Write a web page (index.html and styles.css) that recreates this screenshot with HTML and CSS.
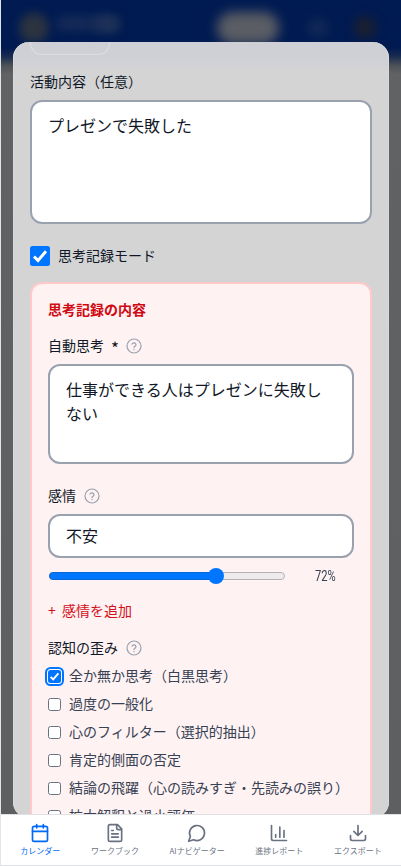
FILE: index.html
```html
<!DOCTYPE html>
<html lang="ja">
<head>
<meta charset="utf-8">
<title>思考記録</title>
<link rel="stylesheet" href="styles.css">
</head>
<body>
<svg class="defs" width="0" height="0" aria-hidden="true">
  <symbol id="help" viewBox="0 0 24 24"><circle cx="12" cy="12" r="10.5"/><path d="M9 9.2a3.1 3.1 0 0 1 6 1c0 2-3 2.4-3 4M12 17.2v.3"/></symbol>
  <symbol id="check" viewBox="0 0 20 20"><path d="M4 10.5l4 4L16 5.3"/></symbol>
</svg>
<div class="app">
  <main class="stage">
    <div class="backdrop">
      <i class="blob logo"></i><i class="blob title"></i><i class="blob title2"></i><i class="blob pill"></i><i class="blob dot"></i><i class="blob user"></i>
    </div>
    <section class="modal">
      <div class="chip"></div>
      <label class="label first">活動内容（任意）</label>
      <div class="field activity">プレゼンで失敗した</div>
      <div class="mode"><span class="box big"><svg><use href="#check"/></svg></span>思考記録モード</div>
      <div class="record">
        <h2>思考記録の内容</h2>
        <div class="label thought">自動思考<span class="star">*</span><svg class="help"><use href="#help"/></svg></div>
        <div class="field auto">仕事ができる人はプレゼンに失敗しない</div>
        <div class="label emotion">感情<svg class="help"><use href="#help"/></svg></div>
        <div class="field feeling">不安</div>
        <div class="range"><div class="track"><span class="fill"></span><span class="thumb"></span></div><span class="value"><span class="num">72%</span></span></div>
        <div class="add"><span class="plus">+</span>感情を追加</div>
        <div class="label distort">認知の歪み<svg class="help"><use href="#help"/></svg></div>
        <div class="options">
          <div class="option"><span class="box on"><svg><use href="#check"/></svg></span>全か無か思考（白黒思考）</div>
          <div class="option"><span class="box"></span>過度の一般化</div>
          <div class="option"><span class="box"></span>心のフィルター（選択的抽出）</div>
          <div class="option"><span class="box"></span>肯定的側面の否定</div>
          <div class="option"><span class="box"></span>結論の飛躍（心の読みすぎ・先読みの誤り）</div>
          <div class="option"><span class="box"></span>拡大解釈と過小評価</div>
        </div>
      </div>
    </section>
  </main>
  <nav class="nav">
    <a class="active"><svg viewBox="0 0 24 24"><rect x="3" y="4" width="18" height="18" rx="2"/><path d="M8 2v4M16 2v4M3 10h18"/></svg><span>カレンダー</span></a>
    <a><svg viewBox="0 0 24 24"><path d="M15 2H6a2 2 0 0 0-2 2v16a2 2 0 0 0 2 2h12a2 2 0 0 0 2-2V7zM14 2v4a2 2 0 0 0 2 2h4M10 9H8M16 13H8M16 17H8"/></svg><span>ワークブック</span></a>
    <a><svg viewBox="0 0 24 24"><path d="M7.9 20A9 9 0 1 0 4 16.1L2 22z"/></svg><span>AIナビゲーター</span></a>
    <a><svg viewBox="0 0 24 24"><path d="M3 3v16a2 2 0 0 0 2 2h16M18 17V9M13 17V5M8 17v-3"/></svg><span>進捗レポート</span></a>
    <a><svg viewBox="0 0 24 24"><path d="M21 15v4a2 2 0 0 1-2 2H5a2 2 0 0 1-2-2v-4M7 10l5 5 5-5M12 15V3"/></svg><span>エクスポート</span></a>
  </nav>
</div>
</body>
</html>
```
FILE: styles.css
```css
* { box-sizing: border-box; }
body { margin: 0; font-family: "Noto Sans CJK JP", sans-serif; font-size: 14px; color: #101828; }
svg { fill: none; stroke: currentColor; stroke-width: 2; stroke-linecap: round; stroke-linejoin: round; }
.defs { position: absolute; }
.app { width: 401px; height: 866px; border-left: 1px solid #e2e4e8; border-bottom: 1px solid #dfe1e5; display: flex; flex-direction: column; overflow: hidden; }
.stage { position: relative; height: 814px; flex: none; overflow: hidden; padding: 42px 12px 0; }
.backdrop { position: absolute; inset: 0; background: linear-gradient(#001b52 0, #001b52 48px, #182a50 56px, #4f5358 66px, #606264 74px, #5d5f61 100%); }
.blob { position: absolute; border-radius: 20px; filter: blur(5px); }
.logo { left: 18px; top: 13px; width: 30px; height: 30px; background: #2b3340; }
.title { left: 55px; top: 16px; width: 62px; height: 15px; background: #152a57; }
.title2 { left: 94px; top: 16px; width: 25px; height: 16px; background: #1e3157; }
.pill { left: 216px; top: 12px; width: 62px; height: 32px; background: #5a5d64; filter: blur(6px); }
.dot { left: 306px; top: 18px; width: 22px; height: 20px; background: #102756; }
.user { left: 353px; top: 16px; width: 22px; height: 23px; background: #181f30; }
.modal { position: relative; height: 776px; border-radius: 16px; overflow: hidden; padding: 0 17px; background: linear-gradient(#cfd0d6 0, #cfd0d6 16px, #d4d4d5 30px); box-shadow: inset 1px 0 #dadadb, inset -1px 0 #dadadb; }
.chip { width: 80px; height: 13px; border: 1px solid #dddee2; border-top: 0; border-radius: 0 0 12px 12px; }
.label { display: flex; align-items: center; height: 20px; padding-bottom: 2px; line-height: 18px; color: #101828; white-space: pre; }
.first { margin-top: 17px; }
.field { background: #fff; border: 2px solid #99a1af; border-radius: 12px; padding: 11px 16px; font-size: 16px; line-height: 24px; color: #101828; }
.activity { width: 342px; height: 124px; margin-top: 8px; }
.mode { display: flex; align-items: center; gap: 8px; height: 20px; line-height: 18px; padding-bottom: 2px; margin-top: 22px; }
.box { flex: none; width: 13px; height: 13px; background: #fff; border: 1px solid #6a7282; border-radius: 2.5px; color: #fff; }
.box svg { display: block; width: 100%; height: 100%; stroke-width: 3; stroke-linecap: butt; stroke-linejoin: miter; }
.big { width: 20px; height: 20px; margin-top: 2px; border: 0; background: #0075ff; }
.on { border: 0; background: #0075ff; box-shadow: 0 0 0 1px #fff, 0 0 0 3px #0075ff; }
.on svg { width: 13px; height: 13px; }
.record { width: 342px; height: 700px; margin-top: 16px; padding: 16px; background: #fef2f2; border: 2px solid #ffc9c9; border-radius: 12px; }
h2 { margin: 0; height: 20px; font-size: 14px; line-height: 18px; font-weight: 700; color: #cf0a12; }
.thought { margin-top: 16px; }
.help { width: 16px; height: 16px; margin: 2px 0 0 8px; color: #99a1af; stroke-width: 1.8; }
.star { width: 7px; margin: 6px 0 0 7px; font-size: 17px; }
.auto { height: 100px; margin-top: 8px; }
.emotion { margin-top: 22px; }
.feeling { height: 44px; margin-top: 8px; padding: 7px 16px; }
.range { display: flex; align-items: center; height: 20px; margin-top: 8px; }
.track { position: relative; width: 236px; height: 8px; margin-left: 1px; border: 1px solid #b5b2b5; border-radius: 4px; background: #efebed; }
.fill { position: absolute; left: -1px; top: -1px; width: 168px; height: 8px; border-radius: 4px; background: #0075ff; border: 1px solid #0867d4; }
.thumb { position: absolute; left: 158px; top: -5px; width: 16px; height: 16px; border-radius: 50%; background: #0075ff; }
.value { width: 22px; margin-left: 30px; color: #364153; font-family: Roboto, sans-serif; }
.num { display: inline-block; transform: scaleX(.8); transform-origin: left; }
.add { display: flex; height: 20px; line-height: 20px; margin-top: 14px; color: #d5101b; }
.plus { width: 14px; }
.distort { margin-top: 18px; }
.options { display: grid; gap: 8px; margin-top: 8px; }
.option { display: flex; align-items: center; gap: 8px; height: 20px; line-height: 18px; padding-bottom: 2px; color: #364153; white-space: nowrap; }
.option .box { margin-top: 2px; }
.nav { position: relative; height: 51px; flex: none; display: flex; justify-content: center; gap: 30.6px; background: #fff; border-top: 1px solid #dfe1e5; padding-top: 8px; }
.nav a { display: flex; flex-direction: column; align-items: center; color: #6a7282; }
.nav svg { width: 20px; height: 20px; }
.nav span { font-size: 8px; line-height: 12px; margin-top: 2px; white-space: nowrap; }
.nav .active { color: #0069f5; }
```
